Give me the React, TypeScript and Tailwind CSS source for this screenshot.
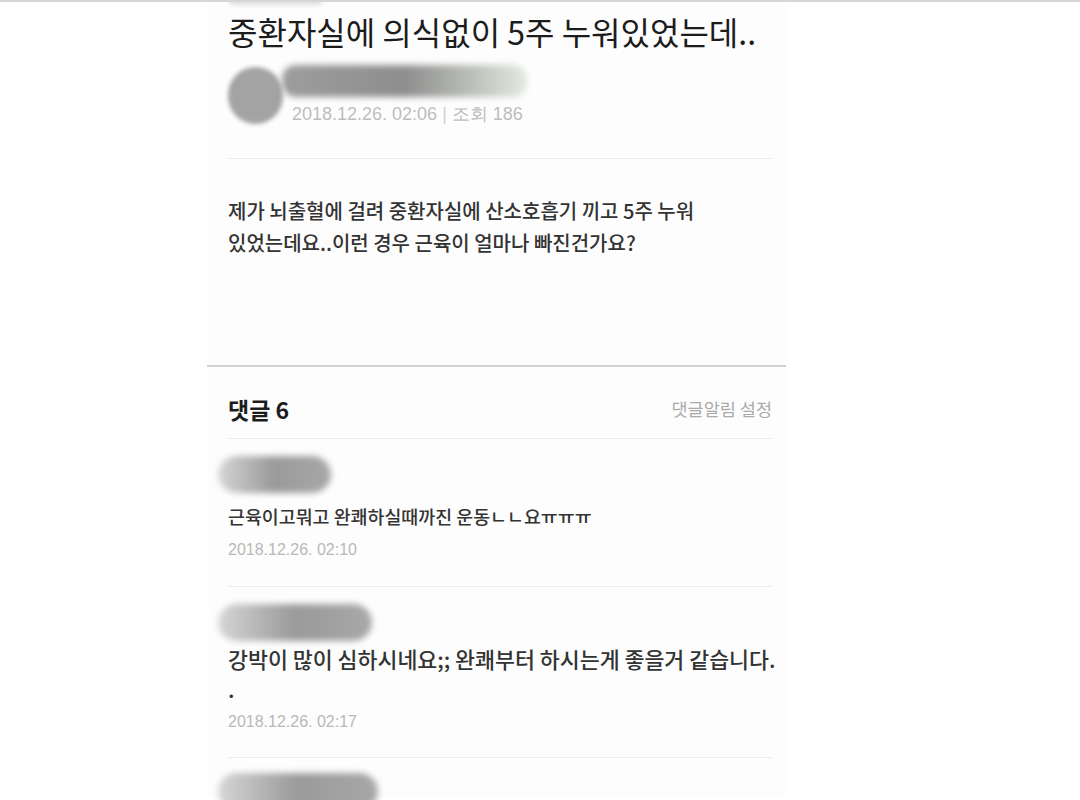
import type { ReactNode } from 'react'

// Comment thread screenshot: post header, body, and comment list

interface CommentData {
  barWidth: number
  text: ReactNode
  date: string
  textClass: string
  dateGap: string
  afterGap: string
}

const COMMENTS: CommentData[] = [
  {
    barWidth: 113,
    text: '근육이고뭐고 완쾌하실때까진 운동ㄴㄴ요ㅠㅠㅠ',
    date: '2018.12.26. 02:10',
    textClass: 'mt-[9px] text-[18.4px] leading-[28px]',
    dateGap: 'mt-[9px]',
    afterGap: 'mt-[25px]',
  },
  {
    barWidth: 154,
    text: (
      <>
        강박이 많이 심하시네요;; 완쾌부터 하시는게 좋을거 같습니다.
        <br />.
      </>
    ),
    date: '2018.12.26. 02:17',
    textClass: 'mt-[3px] text-[21.7px] leading-[30px]',
    dateGap: 'mt-[7px]',
    afterGap: 'mt-[24px]',
  },
]

function BlurBar({ width }: { width: number }) {
  return (
    <div
      className="h-[37px] rounded-full bg-gradient-to-r from-[#d6d6d6] via-[#9a9a9a] to-[#a8a8a8] blur-[3px] -ml-[10px]"
      style={{ width }}
    />
  )
}

function Comment({ c }: { c: CommentData }) {
  return (
    <div>
      <BlurBar width={c.barWidth} />
      <p className={`${c.textClass} whitespace-nowrap font-medium text-[#333]`}>{c.text}</p>
      <p className={`${c.dateGap} text-[16px] leading-[22px] text-[#b8b8b8] font-['Liberation_Sans',sans-serif]`}>
        {c.date}
      </p>
    </div>
  )
}

export default function App() {
  return (
    <div className="h-[800px] w-full overflow-hidden bg-white border-t-2 border-[#d6d6d6] font-['Noto_Sans_CJK_KR',sans-serif]">
      <div className="ml-[207px] w-[579px] h-full bg-[#fdfdfd]">
        <div className="pl-[21px] pr-[14px]">
          {/* tail of the previous (cut-off) author bar */}
          <div className="-mt-[3px] h-[6px] w-[95px] rounded-b-full bg-[#dedede] blur-[2px]" />

          {/* post title */}
          <h1 className="pt-[6px] text-[32px] leading-[40px] font-normal text-[#1c1c1c]">
            중환자실에 의식없이 5주 누워있었는데..
          </h1>

          {/* author row */}
          <div className="mt-[14px] flex items-start">
            <div className="mt-[2px] w-[55px] h-[57px] rounded-full bg-[#a3a3a3] blur-[2px] shrink-0" />
            <div className="-ml-[1px]">
              <div className="w-[245px] h-[32px] rounded-[14px] bg-gradient-to-r from-[#9d9d9d] via-[#8e8e8e] to-[#e3eadf] blur-[3px]" />
              <p className="mt-[6px] ml-[10px] text-[18px] leading-[22px] text-[#bdbdbd] font-['Liberation_Sans',sans-serif]">
                2018.12.26. 02:06 <span className="text-[#d0d0d0]">|</span> 조회 186
              </p>
            </div>
          </div>

          <div className="mt-[33px] h-px bg-[#ececec]" />

          {/* post body */}
          <p className="mt-[36px] text-[20px] leading-[32px] font-medium text-[#333]">
            제가 뇌출혈에 걸려 중환자실에 산소호흡기 끼고 5주 누워
            <br />
            있었는데요..이런 경우 근육이 얼마나 빠진건가요?
          </p>
        </div>

        <div className="mt-[106px] h-[2px] bg-[#d2d2d2]" />

        <div className="pl-[21px] pr-[14px]">
          {/* comment header */}
          <div className="mt-[28px] flex items-center justify-between">
            <h2 className="text-[23px] leading-[28px] font-bold text-[#1c1c1c]">댓글 6</h2>
            <span className="text-[17.5px] text-[#aaa]">댓글알림 설정</span>
          </div>
          <div className="mt-[15px] h-px bg-[#ececec]" />

          {COMMENTS.map((c, i) => (
            <div key={i}>
              <div className="mt-[17px]">
                <Comment c={c} />
              </div>
              <div className={`${c.afterGap} h-px bg-[#ececec]`} />
            </div>
          ))}

          <div className="mt-[15px]">
            <BlurBar width={160} />
          </div>
        </div>
      </div>
    </div>
  )
}
